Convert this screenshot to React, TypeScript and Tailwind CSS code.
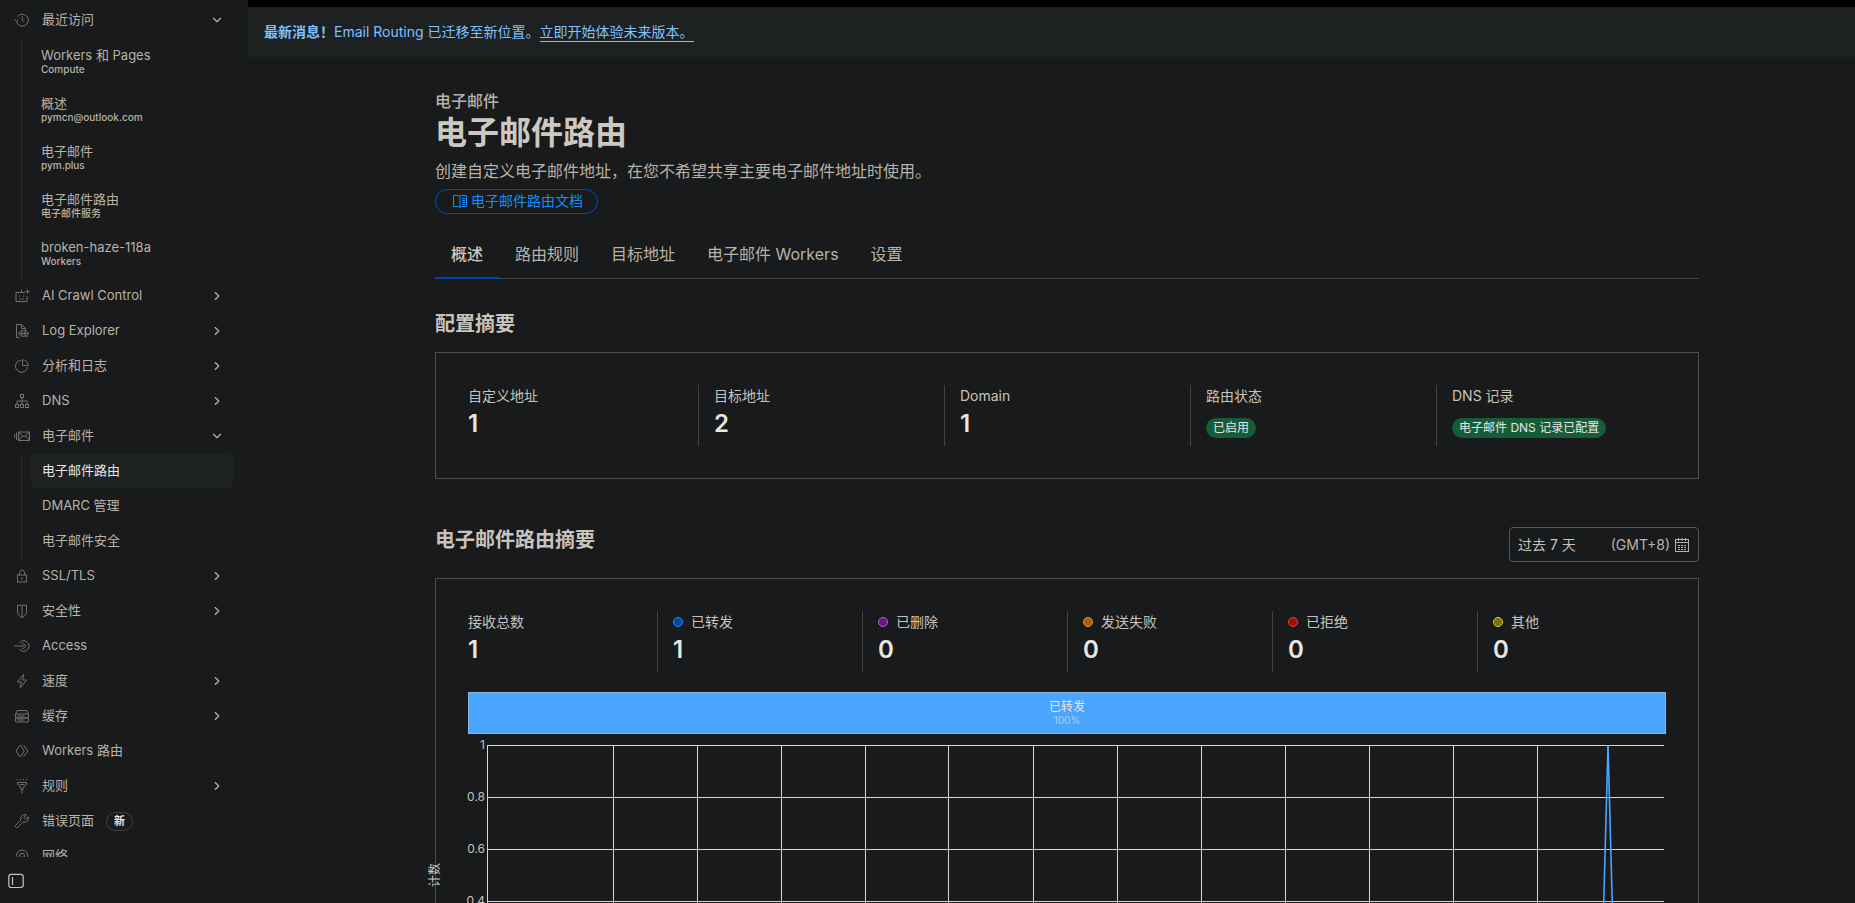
import React from 'react';
import { ChevronDown, ChevronRight } from 'lucide-react';

type IconName =
  | 'history' | 'bot' | 'log' | 'pie' | 'dns' | 'mail' | 'lock' | 'shield' | 'access'
  | 'bolt' | 'cache' | 'workers' | 'rules' | 'wrench' | 'network';

interface NavItem {
  label: string;
  icon: IconName;
  expandable?: boolean;
  open?: boolean;
  badge?: string;
  children?: string[];
}

const recent = [
  { title: 'Workers 和 Pages', sub: 'Compute' },
  { title: '概述', sub: 'pymcn@outlook.com' },
  { title: '电子邮件', sub: 'pym.plus' },
  { title: '电子邮件路由', sub: '电子邮件服务' },
  { title: 'broken-haze-118a', sub: 'Workers' },
];

const nav: NavItem[] = [
  { label: 'AI Crawl Control', icon: 'bot', expandable: true },
  { label: 'Log Explorer', icon: 'log', expandable: true },
  { label: '分析和日志', icon: 'pie', expandable: true },
  { label: 'DNS', icon: 'dns', expandable: true },
  { label: '电子邮件', icon: 'mail', expandable: true, open: true, children: ['电子邮件路由', 'DMARC 管理', '电子邮件安全'] },
  { label: 'SSL/TLS', icon: 'lock', expandable: true },
  { label: '安全性', icon: 'shield', expandable: true },
  { label: 'Access', icon: 'access' },
  { label: '速度', icon: 'bolt', expandable: true },
  { label: '缓存', icon: 'cache', expandable: true },
  { label: 'Workers 路由', icon: 'workers' },
  { label: '规则', icon: 'rules', expandable: true },
  { label: '错误页面', icon: 'wrench', badge: '新' },
  { label: '网络', icon: 'network' },
];

const tabs = ['概述', '路由规则', '目标地址', '电子邮件 Workers', '设置'];

const config = [
  { label: '自定义地址', value: '1' },
  { label: '目标地址', value: '2' },
  { label: 'Domain', value: '1' },
  { label: '路由状态', badge: '已启用' },
  { label: 'DNS 记录', badge: '电子邮件 DNS 记录已配置' },
];

const stats = [
  { label: '接收总数', value: 1, dot: '' },
  { label: '已转发', value: 1, dot: 'bg-[#0045a8] border-[#2f8ff0]' },
  { label: '已删除', value: 0, dot: 'bg-[#6a1783] border-[#b462cd]' },
  { label: '发送失败', value: 0, dot: 'bg-[#a86200] border-[#e79a35]' },
  { label: '已拒绝', value: 0, dot: 'bg-[#a30d08] border-[#e2453c]' },
  { label: '其他', value: 0, dot: 'bg-[#7d7100] border-[#d8c93c]' },
];

const iconPaths: Record<IconName, React.ReactNode> = {
  history: (
    <>
      <path d="M2.4 9.2A6 6 0 1 0 3.3 4.9" />
      <path d="M.8 7.6l1.5 1.9 1.9-1.4M8.3 4.4V8l2 2" />
    </>
  ),
  bot: (
    <>
      <path d="M11 4.5H2v9h11V8" />
      <path d="M7.5 4.5V1.5M5.5 7.5v1.2M9.5 7.5v1.2M5.3 10.6c1.2 1 3.2 1 4.4 0" />
      <path d="M13.5 1.5v4M11.5 3.5h4" />
    </>
  ),
  log: (
    <>
      <path d="M5.5 14.5h-3v-13h5l4 4v2M7.5 1.5v4h4" />
      <ellipse cx="9.6" cy="10.5" rx="4.6" ry="2.8" />
      <path d="M5 10.5h9.4M8 8v5M11 8v5M12 12.6l2 1.6" />
    </>
  ),
  pie: (
    <>
      <path d="M7 2.3A6 6 0 1 0 13.4 9.2" />
      <path d="M8.5 1.8v5.700h5.700a5.700 5.700 0 0 0-5.700-5.700z" />
    </>
  ),
  dns: (
    <>
      <rect x="6.5" y="1.5" width="3" height="3" />
      <rect x="1.5" y="11.5" width="3" height="3" />
      <rect x="6.5" y="11.5" width="3" height="3" />
      <rect x="11.5" y="11.5" width="3" height="3" />
      <path d="M8 4.500v7M3 11.500v-3.500h10v3.500" />
    </>
  ),
  mail: (
    <>
      <rect x="4.5" y="4" width="11" height="8.5" />
      <path d="M4.5 4l5.500 5 5.500-5M4.500 12.500l4-5M15.500 12.500l-4-5M2.500 4.500v7.500M.7 6.500v3.500" />
    </>
  ),
  lock: (
    <>
      <rect x="3.5" y="7" width="9" height="7" />
      <path d="M5.500 7V4.500a2.500 2.500 0 0 1 5 0V7M8 9.400v2.400" />
    </>
  ),
  shield: <path d="M3.500 2.200h9v6.200c0 3-2 4.800-4.500 6.200-2.500-1.400-4.500-3.200-4.500-6.200zM8 2.200v12.400" />,
  access: (
    <>
      <path d="M5.200 5.200a5.300 5.300 0 1 1 0 5.600" />
      <path d="M.2 8h10M8 5.800a2.400 2.400 0 1 1 0 4.400" />
    </>
  ),
  bolt: <path d="M9.8 1.200L3.400 9h4l-1.300 6L12.600 7H8.500z" />,
  cache: (
    <>
      <path d="M1.500 6l1.800-3.500h9.400L14.500 6" />
      <rect x="1.500" y="6" width="13" height="4" rx="1" />
      <rect x="1.500" y="10" width="13" height="4" rx="1" />
      <path d="M3.400 8h7M3.400 12h7" />
    </>
  ),
  workers: (
    <>
      <path d="M6 2.200L2 8l4 5.800M6.600 2.200L10.200 8l-3.600 5.800" />
      <path d="M9.600 2.200L14 8l-4.400 5.800" />
    </>
  ),
  rules: (
    <>
      <path d="M3.500 4.500h9v2L9 9.500V12H7V9.500l-3.500-3z" />
      <path d="M3.400 1v1.200M6.400 1v1.200M9.600 1v1.200M12.600 1v1.200M8 13v2.600M5.600 6.600h4.800" />
    </>
  ),
  wrench: (
    <path d="M12.200 1.800a4.100 4.100 0 0 0-5.300 5.300L1.600 12.300a1.500 1.500 0 0 0 2.100 2.100l5.300-5.300a4.100 4.100 0 0 0 5.200-5.300L11.600 6.200 9.800 4.400z" />
  ),
  network: (
    <>
      <path d="M4.600 12.600a5.800 5.800 0 1 1 6.800 0" />
      <circle cx="8" cy="8" r="2.600" />
      <path d="M8 8v6" />
    </>
  ),
};

const NavIcon: React.FC<{ name: IconName }> = ({ name }) => (
  <svg viewBox="0 0 16 16" className="w-4 h-4 shrink-0 text-[#78716a]" fill="none" stroke="currentColor" strokeWidth="1">
    {iconPaths[name]}
  </svg>
);

const Row: React.FC<{ item: NavItem }> = ({ item }) => (
  <button type="button" aria-expanded={item.open} className="w-full h-[34px] shrink-0 pl-[14px] pr-6 flex items-center text-left text-[13px]">
    <NavIcon name={item.icon} />
    <span className="ml-3">{item.label}</span>
    {item.badge && (
      <span className="ml-3 h-[19px] px-[7px] flex items-center rounded-full border border-[#3d4244] text-[11px] font-bold text-[#e8e6e3]">
        {item.badge}
      </span>
    )}
    {item.expandable && (
      item.open
        ? <ChevronDown className="w-[14px] h-[14px] ml-auto" />
        : <ChevronRight className="w-[14px] h-[14px] ml-auto" />
    )}
  </button>
);

const Sidebar: React.FC = () => (
  <aside className="w-[248px] shrink-0 flex flex-col">
    <nav className="flex-1 min-h-0 overflow-hidden pt-[3px] flex flex-col gap-px">
      <Row item={{ label: '最近访问', icon: 'history', expandable: true, open: true }} />
      <ul className="ml-[21px] border-l border-[#2b2f31] shrink-0">
        {recent.map((r) => (
          <li key={r.title}>
            <a href="#" className="h-12 pl-[19px] pb-0.5 flex flex-col justify-center">
              <span className="text-[13px] leading-4">{r.title}</span>
              <span className="text-[10px] leading-3 font-medium">{r.sub}</span>
            </a>
          </li>
        ))}
      </ul>
      {nav.map((item) => (
        <div key={item.label} className="shrink-0">
          <Row item={item} />
          {item.children && (
            <ul className="mt-px ml-[21px] border-l border-[#2b2f31] pl-2 pr-[14px] flex flex-col gap-px">
              {item.children.map((c, i) => (
                <li key={c}>
                  <a
                    href="#"
                    className={`h-[34px] px-3 flex items-center rounded-lg text-[13px] ${i === 0 ? 'bg-[#1e2223] text-[#e8e6e3]' : ''}`}
                  >
                    {c}
                  </a>
                </li>
              ))}
            </ul>
          )}
        </div>
      ))}
    </nav>
    <div className="h-[46px] shrink-0 pt-0.5 pl-2 flex items-center">
      <button type="button" aria-label="Toggle sidebar">
        <svg viewBox="0 0 16 16" className="w-4 h-4" fill="none" stroke="#c8c3bc" strokeWidth="1.2">
          <rect x=".8" y="1.3" width="14.4" height="13.2" rx="2.4" />
          <path d="M4.5 4v8" />
        </svg>
      </button>
    </div>
  </aside>
);

// vertical grid lines, as a share of the plot width
const columns = Array.from({ length: 12 }, (_, i) => ((126 + i * 84) / 1177) * 100);
const ticks = ['1', '0.8', '0.6', '0.4', '0.2', '0'];
const peak = (1121 / 1177) * 100;
const spread = (7 / 1177) * 100;

const Chart: React.FC = () => (
  <div className="mt-[11px] pl-[19px] pr-[2px]">
    <svg className="w-full h-[300px] overflow-visible" fill="none">
      <g stroke="#d8d4cf" strokeWidth="1" shapeRendering="crispEdges">
        {ticks.map((t, i) => (
          <line key={t} x1="0" x2="100%" y1={i * 52} y2={i * 52} />
        ))}
        {columns.map((x) => (
          <line key={x} x1={`${x}%`} x2={`${x}%`} y1="0" y2="260" />
        ))}
        <line x1="0" x2="0" y1="0" y2="260" />
      </g>
      <g stroke="#4aa5ff" strokeWidth="1.6">
        <line x1={`${peak - spread}%`} y1="260" x2={`${peak}%`} y2="0" />
        <line x1={`${peak}%`} y1="0" x2={`${peak + spread}%`} y2="260" />
      </g>
      <g fill="#c8c3bc" fontSize="12" textAnchor="end">
        {ticks.map((t, i) => (
          <text key={t} x="-2" y={i * 52 + 4}>{t}</text>
        ))}
      </g>
      <text fill="#c8c3bc" fontSize="12" textAnchor="middle" transform="translate(-48 130) rotate(-90)">计数</text>
    </svg>
  </div>
);

const CalendarIcon: React.FC = () => (
  <svg viewBox="0 0 16 16" className="w-4 h-4" fill="none" stroke="currentColor" strokeWidth="1">
    <rect x="1.5" y="2.5" width="13" height="12" />
    <path d="M1.5 5.5h13M4.5 1v3M8 1v3M11.5 1v3" />
    <path d="M4 8.5h8M4 10.5h8M4 12.5h8" strokeDasharray="2 1" />
  </svg>
);

export default function App() {
  return (
    <div className="h-screen flex overflow-hidden bg-[#181a1b] text-[#b8b2a9] font-['Inter','Noto_Sans_CJK_SC',sans-serif]">
      <Sidebar />
      <div className="flex-1 min-w-0 flex flex-col">
        <div className="h-[7px] shrink-0 bg-black" />
        <div className="h-[50px] shrink-0 px-4 flex items-center bg-[#1d2122] text-sm text-[#7fc0ff]">
          <strong className="font-bold">最新消息！</strong>
          <span>Email Routing 已迁移至新位置。</span>
          <a href="#" className="leading-[18px] border-b border-[#7fc0ff]">立即开始体验未来版本。</a>
        </div>
        <main className="flex-1 min-h-0 overflow-y-auto [scrollbar-width:none] pl-[31px]">
          <div className="max-w-[1264px] mx-auto pt-8">
            <p className="text-base leading-6 font-medium">电子邮件</p>
            <h1 className="text-[32px] leading-10 font-bold text-[#cdc8c2]">电子邮件路由</h1>
            <p className="mt-1.5 text-base leading-6">创建自定义电子邮件地址，在您不希望共享主要电子邮件地址时使用。</p>
            <a
              href="#"
              className="mt-1.5 w-fit h-[25px] pl-4 pr-[14px] pb-px flex items-center gap-[3px] rounded-full border border-[#0051c3] text-sm text-[#1a8cff]"
            >
              <svg viewBox="0 0 16 16" className="w-4 h-4" fill="none" stroke="currentColor" strokeWidth="1">
                <path d="M8 3v11.5M1.5 2.5h5L8 3.5l1.5-1h5v11h-5L8 14.5l-1.5-1h-5z" />
                <path d="M10 5.5h3M10 7.5h3M10 9.5h3M10 11.5h3" />
              </svg>
              电子邮件路由文档
            </a>

            <div role="tablist" className="mt-[17px] h-12 flex border-b border-[#3e4446]">
              {tabs.map((t, i) => (
                <button
                  key={t}
                  type="button"
                  role="tab"
                  aria-selected={i === 0}
                  className={`-mb-px px-4 pb-px text-base ${i === 0 ? 'border-b-2 border-[#0045a8] font-medium text-[#cdc8c2]' : 'border-b-2 border-transparent'}`}
                >
                  {t}
                </button>
              ))}
            </div>

            <h2 className="mt-[31px] text-xl leading-7 font-bold text-[#c8c3bc]">配置摘要</h2>
            <section className="mt-3.5 px-4 py-8 grid grid-cols-5 border border-[#4a4f52]">
              {config.map((c, i) => (
                <div key={c.label} className={`h-[61px] ${i === 0 ? 'pl-4' : 'pl-[15px] border-l border-[#3e4446]'}`}>
                  <div className="text-sm leading-[22px] text-[#c8c3bc]">{c.label}</div>
                  {c.value ? (
                    <div className="mt-px text-2xl leading-8 font-semibold text-[#e8e6e3]">{c.value}</div>
                  ) : (
                    <span className="mt-[11px] w-fit h-5 px-[7px] flex items-center rounded-full bg-[#165c38] text-xs text-[#e8e6e3] whitespace-nowrap">{c.badge}</span>
                  )}
                </div>
              ))}
            </section>

            <div className="mt-12 flex justify-between">
              <h2 className="mt-[-1px] text-xl leading-7 font-bold text-[#c8c3bc]">电子邮件路由摘要</h2>
              <button type="button" className="w-[190px] h-[35px] px-2 flex items-center rounded border border-[#5c564e] text-sm">
                <span className="text-[#c8c3bc]">过去 7 天</span>
                <span className="ml-auto mr-1">(GMT+8)</span>
                <CalendarIcon />
              </button>
            </div>

            <section className="mt-4 px-4 py-8 border border-[#4a4f52]">
              <div className="grid grid-cols-6">
                {stats.map((s, i) => (
                  <div key={s.label} className={`h-[61px] ${i === 0 ? 'pl-4' : 'pl-[15px] border-l border-[#3e4446]'}`}>
                    <div className="flex items-center gap-2 text-sm leading-[22px] text-[#c8c3bc]">
                      {s.dot && <span className={`w-[10px] h-[10px] rounded-full border ${s.dot}`} />}
                      {s.label}
                    </div>
                    <div className="mt-px text-2xl leading-8 font-semibold text-[#e8e6e3]">{s.value}</div>
                  </div>
                ))}
              </div>
              <div className="px-4">
                <div className="mt-5 h-[42px] flex flex-col items-center justify-center border border-[#8ab4dc] bg-[#4aa5ff] text-[#e8e6e3]">
                  <span className="text-xs leading-[14px]">已转发</span>
                  <span className="text-[10px] leading-3 opacity-60">100%</span>
                </div>
                <Chart />
              </div>
            </section>
          </div>
        </main>
      </div>
    </div>
  );
}
